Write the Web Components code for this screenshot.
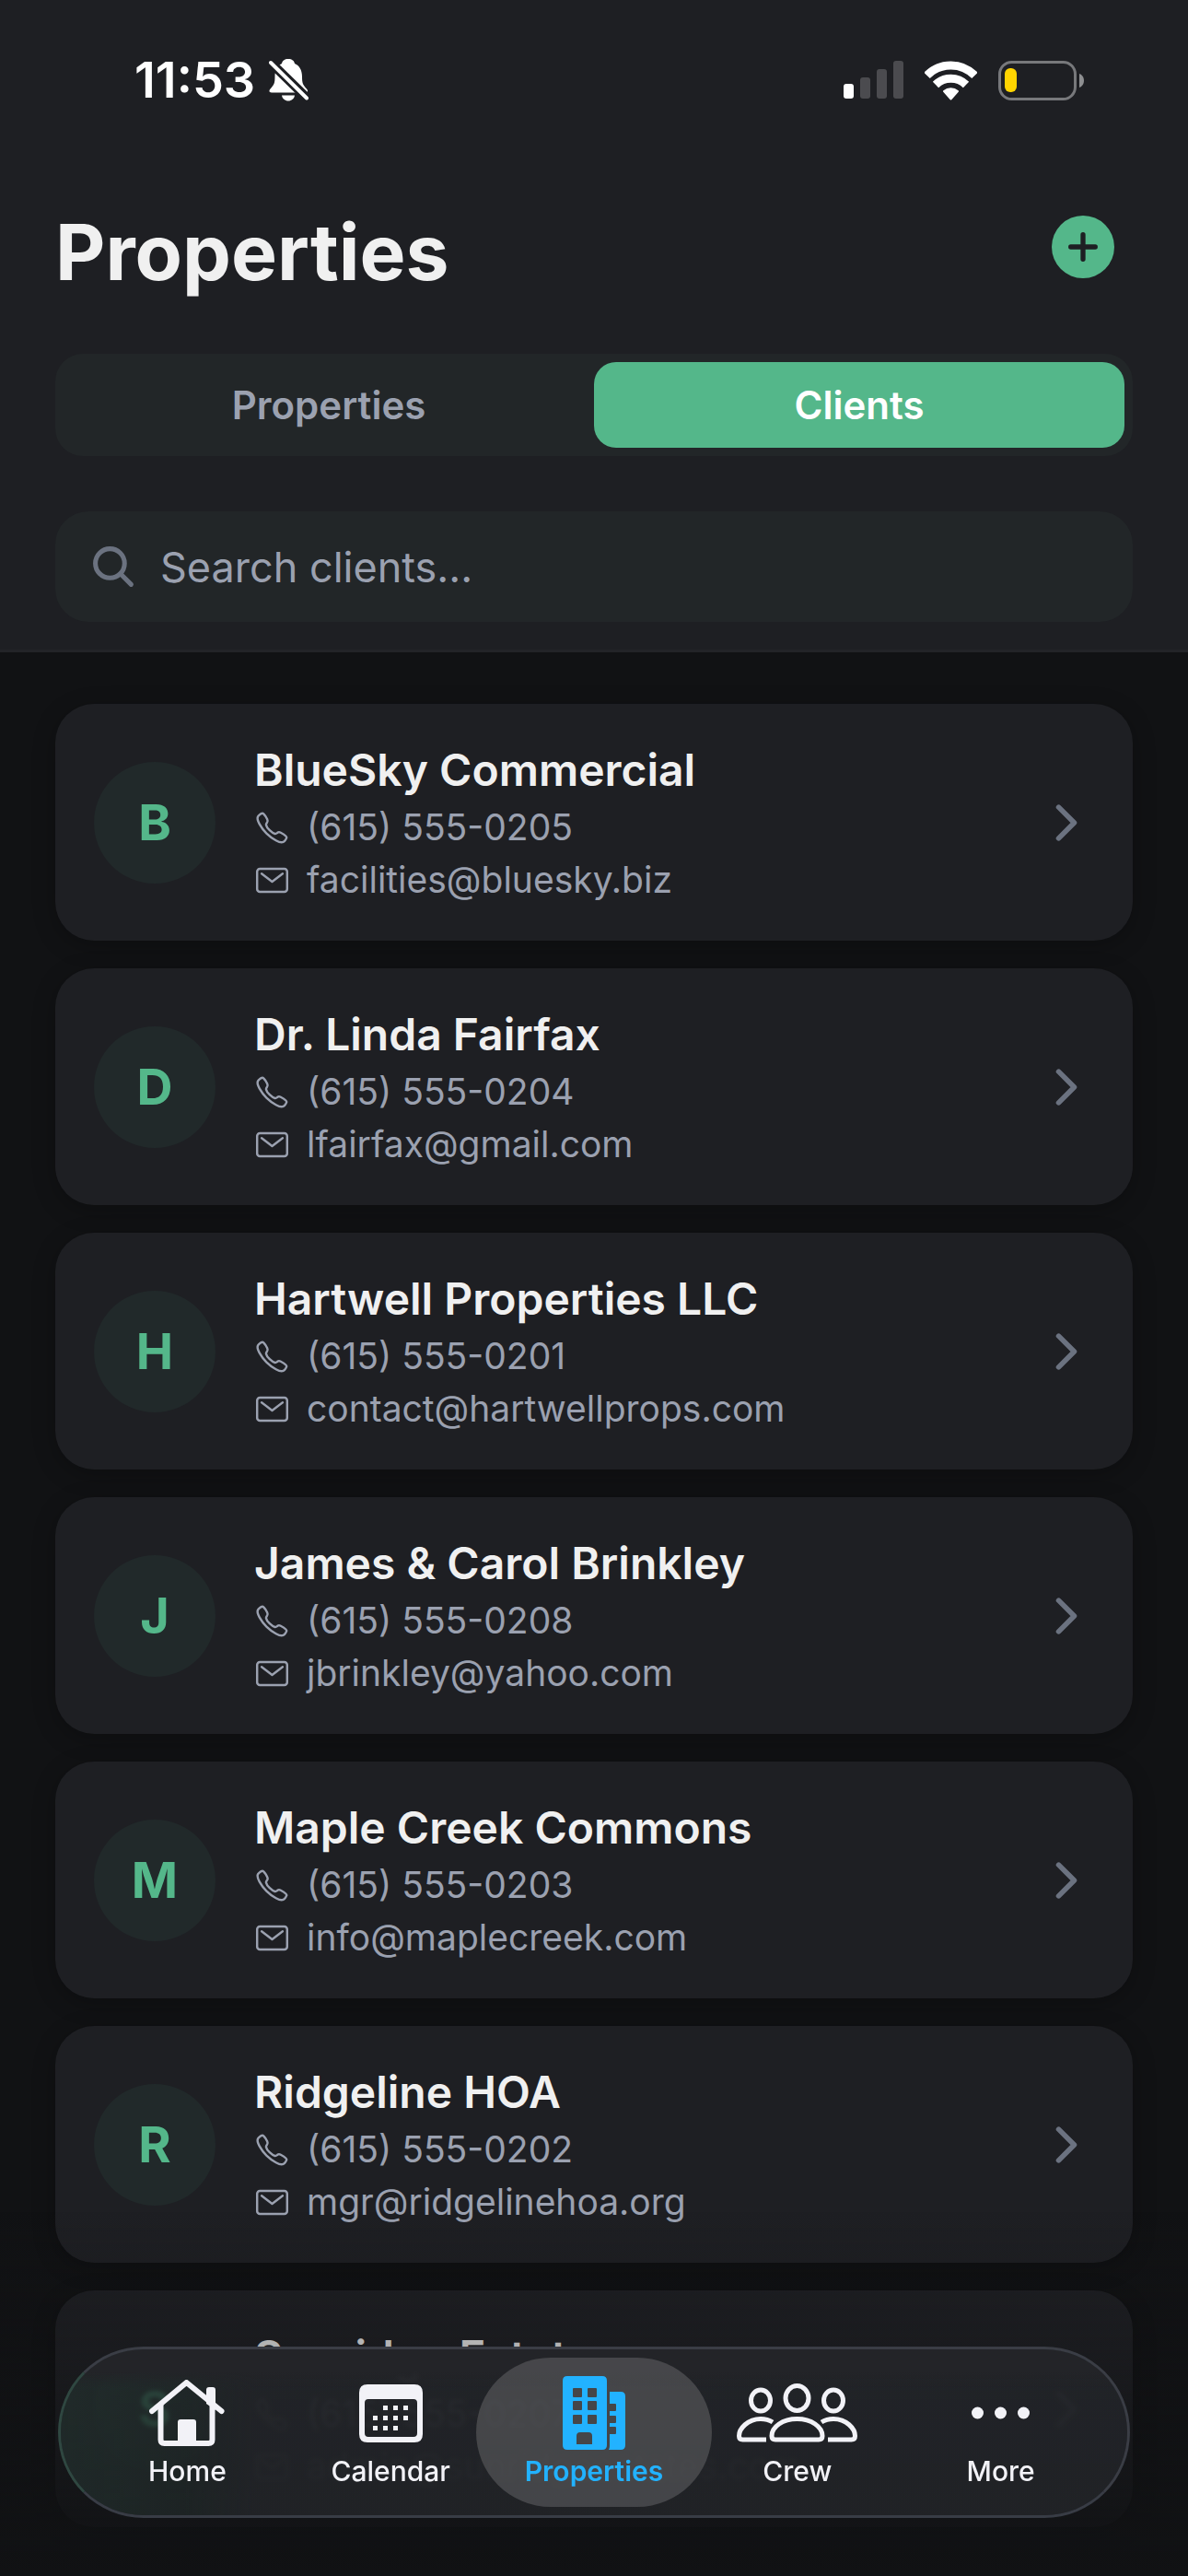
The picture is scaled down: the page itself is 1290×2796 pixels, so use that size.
<!DOCTYPE html>
<html lang="en">
<head>
<meta charset="utf-8">
<meta name="viewport" content="width=device-width, initial-scale=1">
<title>Properties</title>
<style>
  :root {
    --bg: #111214;
    --surface: #1e1f23;
    --field: #222628;
    --line: #232428;
    --text: #f0f0f0;
    --muted: #9ba1b0;
    --dim: #6b7280;
    --accent: #54b78a;
    --active: #22b2ff;
  }

  body {
    margin: 0;
    min-height: 100vh;
    background: var(--bg);
    color: var(--text);
    font-family: Inter, "Liberation Sans", sans-serif;
    font-optical-sizing: none;
  }
</style>
</head>
<body>
<clients-page></clients-page>

<script>
const ICONS = {
  bell: ['0 0 43 46', `
    <path fill="currentColor" d="M21 0c4 0 6.500 2 7 5 5 2 8 7 8 14 0 8 1 9 5 13.500 2 2.500 1 4-1.500 4H3c-2.500 0-3.500-1.500-1.500-4 4-4.500 5-5.500 5-13.500 0-7 3-12 7.500-14 .5-3 3-5 7-5z"/>
    <path fill="currentColor" d="M14 39.500h14c-.5 3.500-3.500 6-7 6s-6.500-2.500-7-6z"/>
    <path stroke="var(--surface)" stroke-width="10" d="M0 2l43 42"/>
    <path stroke="currentColor" stroke-width="4" stroke-linecap="round" d="M2 4l39 38.500"/>`],
  signal: ['0 0 65 42', `
    <g fill="currentColor">
      <rect y="25" width="11" height="16" rx="3"/>
      <rect x="18" y="18" width="11" height="23" rx="3" opacity=".2"/>
      <rect x="36" y="9" width="11" height="32" rx="3" opacity=".2"/>
      <rect x="54" width="11" height="41" rx="3" opacity=".2"/>
    </g>`],
  wifi: ['0 0 57 43', `
    <g fill="none" stroke="currentColor" stroke-width="9">
      <path d="M2.500 16a36 36 0 0 1 52 0"/>
      <path d="M12 26a23.500 23.500 0 0 1 33 0"/>
    </g>
    <path fill="currentColor" stroke="currentColor" stroke-width="2" stroke-linejoin="round" d="M21 33a12 12 0 0 1 15 0l-7.500 8.500z"/>`],
  battery: ['0 0 93 43', `
    <rect x="1.500" y="1.500" width="82" height="40" rx="13" fill="none" stroke="#77787b" stroke-width="3"/>
    <rect x="7" y="8" width="13" height="26" rx="6" fill="#ffd400"/>
    <path fill="#8e8f91" d="M88 14c3 1 5 4 5 7.500s-2 6.500-5 7.500z"/>`],
  add: ['0 0 512 512', `
    <circle cx="256" cy="256" r="256" fill="var(--accent)"/>
    <path stroke="var(--surface)" stroke-width="40" stroke-linecap="round" d="M256 156v200M156 256h200"/>`],
  search: ['0 0 512 512', `
    <g fill="none" stroke="currentColor" stroke-width="48" stroke-linecap="round">
      <circle cx="222" cy="222" r="150"/>
      <path d="M332 332l108 108"/>
    </g>`],
  phone: ['0 0 512 512', `
    <path fill="none" stroke="currentColor" stroke-width="32" stroke-miterlimit="10" d="M451 374c-15.880-16-54.340-39.350-73-48.760-24.300-12.240-26.300-13.240-45.400.95-12.740 9.470-21.210 17.930-36.120 14.750s-47.310-21.110-75.680-49.390-47.340-61.620-50.530-76.480 5.410-23.230 14.790-36c13.220-18 12.220-21 .92-45.300-8.810-18.900-32.840-57-48.900-72.800C119.900 44 119.900 47 108.830 51.600A160.150 160.150 0 0 0 83 65.370C67 76 58.120 84.830 51.910 98.100s-9 44.380 23.070 102.640 54.570 88.050 101.140 134.490S258.500 406.640 310.850 436c64.760 36.270 89.600 29.200 102.910 23s22.180-15 32.830-31a159.090 159.090 0 0 0 13.800-25.800C465 391.170 468 391.170 451 374z"/>`],
  mail: ['0 0 512 512', `
    <g fill="none" stroke="currentColor" stroke-width="32" stroke-linecap="round" stroke-linejoin="round">
      <rect x="42" y="92" width="428" height="328" rx="40"/>
      <path d="M106 160l150 116 150-116"/>
    </g>`],
  chevron: ['0 0 512 512', `
    <path fill="none" stroke="currentColor" stroke-width="48" stroke-linecap="round" stroke-linejoin="round" d="M184 112l144 144-144 144"/>`],
  home: ['0 0 82 72', `
    <g fill="none" stroke="currentColor" stroke-width="6" stroke-linecap="round" stroke-linejoin="round">
      <path d="M3 34L40.500 3 78.500 34"/>
      <path stroke-linecap="butt" d="M12.500 27v38q0 4 4 4h48q4 0 4-4V27"/>
    </g>
    <path fill="currentColor" d="M62 26V11q0-3 3-3h4q3 0 3 3v22zM31 70V46q0-3 3-3h14q3 0 3 3v24z"/>`],
  calendar: ['0 0 69 63', `
    <path fill="currentColor" fill-rule="evenodd" d="M9 0h51q9 0 9 9v45q0 9-9 9H9q-9 0-9-9V9q0-9 9-9zm1 16q-4 0-4 4v33q0 4 4 4h49q4 0 4-4V20q0-4-4-4z"/>
    <path fill="currentColor" d="M26 23h5v5h-5zM37 23h5v5h-5zM48 23h5v5h-5zM15 34h5v5h-5zM26 34h5v5h-5zM37 34h5v5h-5zM48 34h5v5h-5zM15 45h5v5h-5zM26 45h5v5h-5zM37 45h5v5h-5z"/>`],
  building: ['0 0 68 80', `
    <path fill="currentColor" fill-rule="evenodd" d="M5 0h38q5 0 5 5v70q0 5-5 5H5q-5 0-5-5V5q0-5 5-5zm7 13q-1 0-1 1v8q0 1 1 1h8q1 0 1-1v-8q0-1-1-1zm16 0q-1 0-1 1v8q0 1 1 1h8q1 0 1-1v-8q0-1-1-1zM12 27q-1 0-1 1v8q0 1 1 1h8q1 0 1-1v-8q0-1-1-1zm16 0q-1 0-1 1v8q0 1 1 1h8q1 0 1-1v-8q0-1-1-1zM12 42q-1 0-1 1v8q0 1 1 1h8q1 0 1-1v-8q0-1-1-1zm16 0q-1 0-1 1v8q0 1 1 1h8q1 0 1-1v-8q0-1-1-1zM19 61q-4 0-4 4v9h17v-9q0-4-4-4z"/>
    <path fill="currentColor" d="M51 17h12q5 0 5 5v53q0 5-5 5H50q1-2 1-4V63h6q1 0 1-1v-6q0-1-1-1h-6v-4h6q1 0 1-1v-6q0-1-1-1h-6v-5h6q1 0 1-1v-6q0-1-1-1h-6z"/>`],
  crew: ['0 0 131 64', `
    <g fill="none" stroke="currentColor" stroke-width="5">
      <ellipse cx="65.500" cy="16" rx="12.500" ry="13.500"/>
      <ellipse cx="26" cy="18.500" rx="10.500" ry="11.500"/>
      <ellipse cx="105" cy="18.500" rx="10.500" ry="11.500"/>
      <path d="M42 61h47q4 0 4-4c0-10-12-18.500-27.500-18.500S38 47 38 57q0 4 4 4z"/>
      <path d="M39 42c-4-2.500-8.500-3.500-13-3.500C12 38.500 2.500 49 2.500 57q0 4 4 4h25.500"/>
      <path d="M92 42c4-2.500 8.500-3.500 13-3.500 14 0 23.500 10.500 23.500 18.500q0 4-4 4H99"/>
    </g>`],
  more: ['0 0 63 14', `
    <g fill="currentColor"><circle cx="6.500" cy="7" r="6.500"/><circle cx="31.500" cy="7" r="6.500"/><circle cx="56.500" cy="7" r="6.500"/></g>`],
};

// <app-icon name="..."> is sized by its user
class AppIcon extends HTMLElement {
  constructor() {
    super();
    const [viewBox, shapes] = ICONS[this.getAttribute('name')];
    this.attachShadow({ mode: 'open' }).innerHTML = `
    <style>
      :host { display: block; flex: none; }
      svg { display: block; width: 100%; height: 100%; }
    </style>
    <svg viewBox="${viewBox}" aria-hidden="true">${shapes}</svg>`;
  }
}

class StatusBar extends HTMLElement {
  constructor() {
    super();
    this.attachShadow({ mode: 'open' }).innerHTML = `
    <style>
      :host {
        display: flex;
        align-items: center;
        justify-content: space-between;
        height: 66px;
        padding: 54px 113px 0 146px;
        color: #fff;
      }
      .side { display: flex; align-items: center; }
      time { font-size: 54px; line-height: 66px; font-weight: 600; }
      .left { gap: 15px; }
      .right { gap: 23px; }
      .bell { width: 43px; height: 46px; }
      .signal { width: 65px; height: 42px; }
      .wifi { width: 57px; height: 43px; }
      .battery { width: 93px; height: 43px; }
    </style>
    <div class="side left">
      <time><slot></slot></time>
      <app-icon class="bell" name="bell"></app-icon>
    </div>
    <div class="side right">
      <app-icon class="signal" name="signal"></app-icon>
      <app-icon class="wifi" name="wifi"></app-icon>
      <app-icon class="battery" name="battery"></app-icon>
    </div>`;
  }
}

class SegmentButton extends HTMLElement {
  constructor() {
    super();
    const selected = this.hasAttribute('selected');
    this.attachShadow({ mode: 'open' }).innerHTML = `
    <style>
      :host { display: block; flex: 1; }
      button {
        width: 100%;
        padding: 21px 24px;
        border: 0;
        border-radius: 24px;
        background: none;
        color: var(--muted);
        font: inherit;
        font-size: 42px;
        line-height: 51px;
        font-weight: 600;
      }
      :host([selected]) button { background: var(--accent); color: #fff; }
    </style>
    <button type="button" aria-pressed="${selected}"><slot></slot></button>`;
  }
}

class SearchField extends HTMLElement {
  constructor() {
    super();
    const hint = this.getAttribute('placeholder') || '';
    this.attachShadow({ mode: 'open' }).innerHTML = `
    <style>
      :host { display: block; }
      label {
        display: flex;
        align-items: center;
        gap: 24px;
        padding: 30px 36px;
        border-radius: 36px;
        background: var(--field);
        color: var(--dim);
      }
      app-icon { width: 54px; height: 54px; }
      input {
        flex: 1;
        min-width: 0;
        height: 60px;
        padding: 0;
        border: 0;
        outline: 0;
        background: none;
        color: var(--text);
        font: inherit;
        font-size: 45px;
      }
      input::placeholder { color: var(--muted); opacity: 1; }
    </style>
    <label>
      <app-icon name="search"></app-icon>
      <input type="text" placeholder="${hint}" aria-label="${hint}">
    </label>`;
  }
}

class ClientCard extends HTMLElement {
  constructor() {
    super();
    this.attachShadow({ mode: 'open' }).innerHTML = `
    <style>
      :host { display: block; }
      a {
        display: flex;
        align-items: center;
        gap: 42px;
        padding: 42px;
        border-radius: 42px;
        background: var(--surface);
        box-shadow: 0 6px 24px rgba(0, 0, 0, 0.25);
        color: var(--muted);
        text-decoration: none;
      }
      .avatar {
        flex: none;
        display: grid;
        place-items: center;
        width: 132px;
        height: 132px;
        border-radius: 50%;
        background: #21292a;
        color: var(--accent);
        font-size: 54px;
        font-weight: 700;
      }
      .info { flex: 1; min-width: 0; display: grid; gap: 9px; }
      .name { color: var(--text); font-size: 48px; line-height: 59px; font-weight: 600; }
      .row { display: flex; align-items: center; gap: 18px; font-size: 39px; line-height: 48px; }
      .row app-icon { width: 39px; height: 39px; }
      .chevron { width: 60px; height: 60px; color: var(--dim); }
    </style>
    <a href="#client">
      <span class="avatar">${this.getAttribute('initial')}</span>
      <span class="info">
        <span class="name"><slot></slot></span>
        <span class="row"><app-icon name="phone"></app-icon><slot name="phone"></slot></span>
        <span class="row"><app-icon name="mail"></app-icon><slot name="email"></slot></span>
      </span>
      <app-icon class="chevron" name="chevron"></app-icon>
    </a>`;
  }
}

class TabItem extends HTMLElement {
  constructor() {
    super();
    this.attachShadow({ mode: 'open' }).innerHTML = `
    <style>
      /* neighbouring tabs overlap so the active pill can be wider than its column */
      :host { display: block; margin: 0 -18px; }
      a {
        display: flex;
        flex-direction: column;
        align-items: center;
        gap: 2px;
        height: 145px;
        padding-top: 17px;
        border-radius: 81px;
        color: #f2f2f7;
        text-decoration: none;
        font-size: 30px;
        line-height: 36px;
        font-weight: 500;
      }
      :host([active]) a { background: rgba(112, 112, 116, 0.45); color: var(--active); font-weight: 600; }
      .icon { display: grid; place-items: center; height: 86px; }
      app-icon[name="home"] { width: 82px; height: 72px; }
      app-icon[name="calendar"] { width: 69px; height: 63px; }
      app-icon[name="building"] { width: 68px; height: 80px; }
      app-icon[name="crew"] { width: 131px; height: 64px; }
      app-icon[name="more"] { width: 63px; height: 14px; }
    </style>
    <a href="#tab">
      <span class="icon"><app-icon name="${this.getAttribute('icon')}"></app-icon></span>
      <slot></slot>
    </a>`;
  }
}

class TabBar extends HTMLElement {
  constructor() {
    super();
    this.attachShadow({ mode: 'open' }).innerHTML = `
    <style>
      :host {
        position: fixed;
        inset: auto 0 0;
        padding: 147px 63px 63px;
        background: linear-gradient(rgba(17, 18, 20, 0), rgba(17, 18, 20, 0.28) 37%, rgba(17, 18, 20, 0.85) 85%, rgba(17, 18, 20, 0.95));
      }
      /* glass: the list stays faintly visible below the first few lines of the bar */
      nav {
        display: grid;
        grid-template-columns: repeat(5, 1fr);
        padding: 9px 27px;
        border: 3px solid #3a3d45;
        border-bottom-color: #383c45;
        border-left-color: #2f4741;
        border-radius: 93px;
        background:
          linear-gradient(#232428 24px, rgba(35, 36, 40, 0) 42px),
          linear-gradient(90deg, rgba(35, 48, 46, 0.75), rgba(35, 44, 44, 0.65) 12%, rgba(34, 36, 40, 0.92) 18%);
        background-clip: padding-box;
        backdrop-filter: blur(2px);
      }
    </style>
    <nav><slot></slot></nav>`;
  }
}

class ClientsPage extends HTMLElement {
  constructor() {
    super();
    const clients = [
      ['BlueSky Commercial', '(615) 555-0205', 'facilities@bluesky.biz'],
      ['Dr. Linda Fairfax', '(615) 555-0204', 'lfairfax@gmail.com'],
      ['Hartwell Properties LLC', '(615) 555-0201', 'contact@hartwellprops.com'],
      ['James &amp; Carol Brinkley', '(615) 555-0208', 'jbrinkley@yahoo.com'],
      ['Maple Creek Commons', '(615) 555-0203', 'info@maplecreek.com'],
      ['Ridgeline HOA', '(615) 555-0202', 'mgr@ridgelinehoa.org'],
      ['Sunridge Estates', '(615) 555-0207', 'admin@sunridgeestates.com'],
    ];
    this.attachShadow({ mode: 'open' }).innerHTML = `
    <style>
      :host { display: block; }
      header {
        background: var(--surface);
        border-bottom: 3px solid var(--line);
        padding-bottom: 30px;
      }
      .title {
        display: flex;
        align-items: flex-start;
        justify-content: space-between;
        padding: 103px 69px 0 60px;
      }
      h1 { margin: 0; font-size: 84px; line-height: 102px; font-weight: 700; }
      .add {
        display: grid;
        place-items: center;
        width: 90px;
        height: 90px;
        padding: 0;
        border: 0;
        background: none;
      }
      .add app-icon { width: 68px; height: 68px; }
      .segments {
        display: flex;
        margin: 59px 60px 60px;
        padding: 9px;
        border-radius: 30px;
        background: var(--field);
      }
      search-field { margin: 0 60px; }
      main { display: grid; gap: 30px; padding: 56px 60px 53px; }
    </style>
    <header>
      <status-bar>11:53</status-bar>
      <div class="title">
        <h1>Properties</h1>
        <button class="add" type="button" aria-label="Add client"><app-icon name="add"></app-icon></button>
      </div>
      <div class="segments">
        <segment-button>Properties</segment-button>
        <segment-button selected>Clients</segment-button>
      </div>
      <search-field placeholder="Search clients..."></search-field>
    </header>
    <main>
      ${clients.map(([name, phone, email]) => `
      <client-card initial="${name[0]}">${name}<span slot="phone">${phone}</span><span slot="email">${email}</span></client-card>`).join('')}
    </main>
    <tab-bar>
      <tab-item icon="home">Home</tab-item>
      <tab-item icon="calendar">Calendar</tab-item>
      <tab-item icon="building" active>Properties</tab-item>
      <tab-item icon="crew">Crew</tab-item>
      <tab-item icon="more">More</tab-item>
    </tab-bar>`;
  }
}

customElements.define('app-icon', AppIcon);
customElements.define('status-bar', StatusBar);
customElements.define('segment-button', SegmentButton);
customElements.define('search-field', SearchField);
customElements.define('client-card', ClientCard);
customElements.define('tab-item', TabItem);
customElements.define('tab-bar', TabBar);
customElements.define('clients-page', ClientsPage);
</script>
</body>
</html>
